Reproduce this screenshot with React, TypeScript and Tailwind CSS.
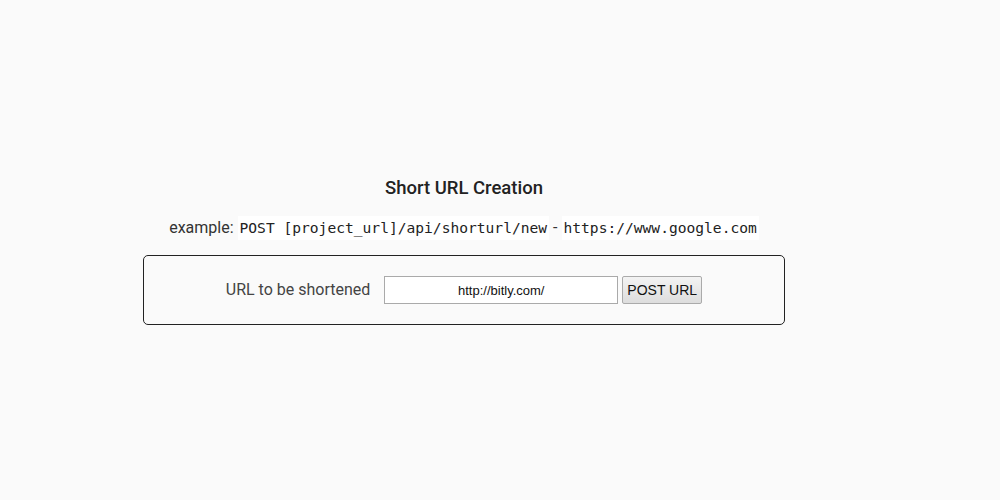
import React, { useState } from 'react';

export default function App() {
  const [url, setUrl] = useState('http://bitly.com/');

  return (
    <div className="min-h-screen w-full bg-[#fafafa] text-[#333] font-['Roboto',sans-serif]">
      <div className="ml-[143px] w-[642px] pt-[176px] flex flex-col items-center">
        <h1 className="text-[18.5px] leading-[24px] font-medium text-[#222]">Short URL Creation</h1>

        <p className="mt-[16px] text-[16px] leading-[24px] text-[#333] flex items-center">
          <span>example:&nbsp;</span>
          <code className="bg-white px-[2px] leading-[24px] font-['DejaVu_Sans_Mono',monospace] text-[14.6px] text-[#222]">
            POST [project_url]/api/shorturl/new
          </code>
          <span className="px-[4px]">-</span>
          <code className="bg-white px-[2px] leading-[24px] font-['DejaVu_Sans_Mono',monospace] text-[14.6px] text-[#222]">
            https://www.google.com
          </code>
        </p>

        <form
          onSubmit={(e) => e.preventDefault()}
          className="mt-[15px] w-full h-[70px] border border-[#222] rounded-[5px] flex items-center justify-center"
        >
          <label className="text-[16px] text-[#444] mr-[14px]">URL to be shortened</label>
          <input
            type="text"
            value={url}
            onChange={(e) => setUrl(e.target.value)}
            className="w-[234px] h-[28px] bg-white border border-[#aaa] text-center text-[13px] text-[#111] font-['Liberation_Sans',sans-serif] outline-none"
          />
          <button
            type="submit"
            className="ml-[4px] w-[80px] h-[28px] border border-[#aaa] rounded-[2px] bg-gradient-to-b from-[#f3f3f3] to-[#dddddd] text-[14px] text-[#111] font-['Liberation_Sans',sans-serif]"
          >
            POST URL
          </button>
        </form>
      </div>
    </div>
  );
}
